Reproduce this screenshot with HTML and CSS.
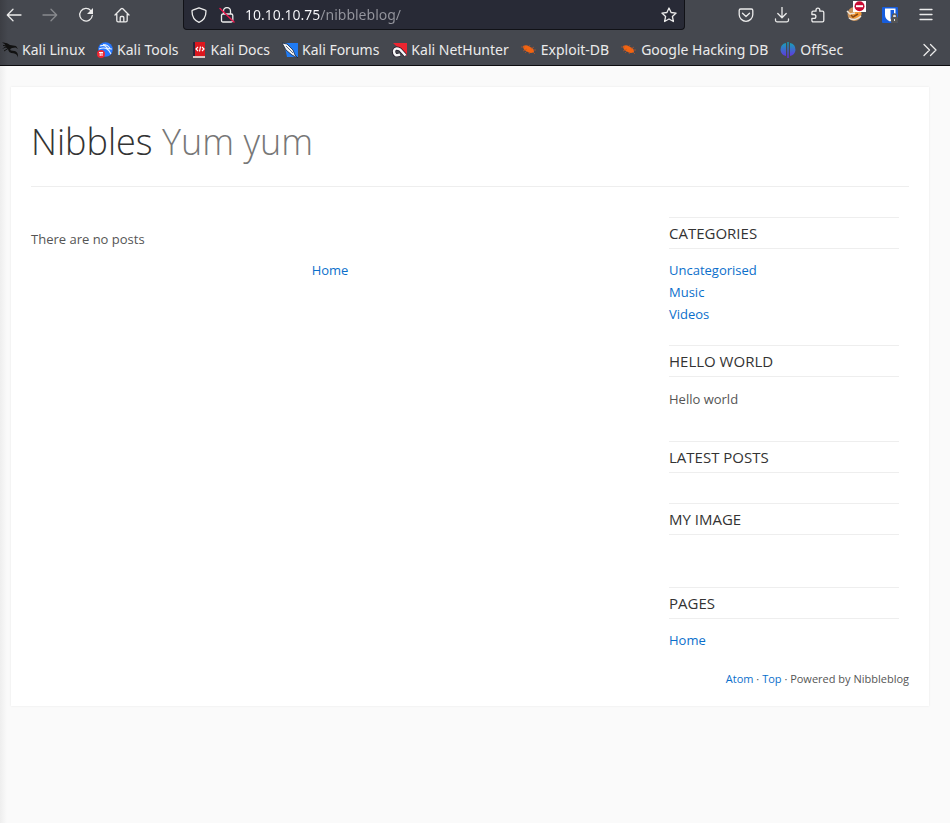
FILE: index.html
```html
<!DOCTYPE html>
<html lang="en">
<head>
<meta charset="utf-8">
<meta name="viewport" content="width=device-width, initial-scale=1">
<title>Nibbles - Yum yum</title>
<link rel="stylesheet" href="styles.css">
</head>
<body>
<div class="chrome">
  <div class="toolbar">
    <div class="tools">
      <button class="tool" aria-label="Back"><svg class="line" viewBox="0 0 16 16"><path d="M15 8H1.5M7 2.2L1.3 8 7 13.8"/></svg></button>
      <button class="tool" aria-label="Forward" disabled><svg class="line" viewBox="0 0 16 16"><path d="M1 8h13.5M9 2.2L14.7 8 9 13.8"/></svg></button>
      <button class="tool" aria-label="Reload"><svg class="line" viewBox="0 0 16 16"><path d="M12.8 3.6A6.3 6.3 0 1 0 14.3 8.500"/><path class="solid" d="M15 1v6H9z"/></svg></button>
      <button class="tool" aria-label="Home page"><svg class="line" viewBox="0 0 16 16"><path d="M1 8l6.200-6.300q.8-.7 1.600 0L15 8M2.800 7v6.500q0 1.300 1.300 1.300h7.800q1.300 0 1.300-1.300V7M6.200 14.500v-4q0-1 1-1h1.600q1 0 1 1v4"/></svg></button>
    </div>
    <div class="urlbar">
      <button class="tool" aria-label="Tracking protection"><svg class="line" viewBox="0 0 16 16"><path d="M8 .8l6.300 2.300q.7.200.7 1C15 9 13 13.500 8 15.400 3 13.500 1 9 1 4.100q0-.8.7-1z"/></svg></button>
      <button class="tool" aria-label="Connection is not secure"><svg class="line" viewBox="0 0 16 16"><path d="M4.500 7V4a3.500 3.500 0 0 1 7 0v3M4 7h8.300q1.500 0 1.500 1.500v5q0 1.500-1.500 1.500H4q-1.500 0-1.500-1.500v-5Q2.500 7 4 7z"/><path class="strike" d="M1 1.500L15 15"/></svg></button>
      <input class="address" type="text" aria-label="Address" value="10.10.10.75/nibbleblog/">
      <button class="tool" aria-label="Bookmark this page"><svg class="line" viewBox="0 0 16 16"><path d="M8 1l2.100 4.500 5 .6-3.700 3.400 1 5L8 12l-4.400 2.500 1-5L.9 6.100l5-.6z"/></svg></button>
    </div>
    <div class="tools">
      <button class="tool" aria-label="Save to Pocket"><svg class="line" viewBox="0 0 16 16"><path d="M2.600 2h10.800q1.400 0 1.400 1.400V7.500a6.800 6.800 0 0 1-13.600 0V3.400Q1.200 2 2.600 2zM4.500 6.200L8 9.500l3.500-3.300"/></svg></button>
      <button class="tool" aria-label="Downloads"><svg class="line" viewBox="0 0 16 16"><path d="M8 0v10.500M3.800 6.500L8 10.700l4.200-4.200M1.500 12v1.300q0 1.500 1.500 1.500h10q1.500 0 1.500-1.500V12"/></svg></button>
      <button class="tool" aria-label="Extensions"><svg class="line" viewBox="0 0 16 16"><path d="M6 4.200V3a1.900 1.900 0 0 1 3.800 0v1.200h2.700q1.300 0 1.300 1.300v8q0 1.300-1.300 1.300H3.200q-1.300 0-1.300-1.300v-2.200H4a1.900 1.900 0 0 0 0-3.800H1.900v-2q0-1.300 1.300-1.300z"/></svg></button>
      <button class="tool badged" aria-label="FoxyProxy"><svg viewBox="-4 -1 24 22"><circle cx="8.500" cy="13" r="7" fill="#c9935d"/><path d="M2 11l5 1 7-5 1.500 6-4 5-6-1z" fill="#f49b37"/><path d="M1 10l3 3 5-1M3 17q5 4 12-2" stroke="#e9e4dc" stroke-width="1.500" fill="none"/><path d="M5 14l2 2 5-3" stroke="#884815" stroke-width="1.500" fill="none"/><path d="M7 0h13v11H7z" fill="#fff"/><circle cx="13.500" cy="5.200" r="5" fill="#c80a32"/><path d="M10 4.200h7v2h-7z" fill="#fff"/></svg></button>
      <button class="tool" aria-label="Bitwarden"><svg viewBox="0 0 16 16"><rect width="16" height="16" rx="1" fill="#175ddc"/><path d="M3 1.500h10.500V8q0 4-5.500 6.500Q3 12 3 8z" fill="#fff"/><path d="M8.500 3H12v5q0 2.500-3.500 4.500z" fill="#175ddc"/><path d="M10.500 10.500V9a2 2 0 0 1 4 0v1.500" stroke="#555" stroke-width="1.300" fill="#ddd"/><rect x="9" y="10" width="7" height="6" rx="1" fill="#555"/><path d="M12 12h1v2h-1z" fill="#ddd"/></svg></button>
      <button class="tool" aria-label="Open application menu"><svg class="line" viewBox="0 0 16 16"><path d="M2 2.500h12M2 7.500h12M2 12.500h12"/></svg></button>
    </div>
  </div>
  <nav class="bookmarks" aria-label="Bookmarks">
    <a href="#"><svg viewBox="0 0 16 16"><path d="M0 .5Q5 0 8 3l3 .5 3 .5 2 3-2.500-1.500-3.500.5q-3 1-1 2.500l3.500.5q4 1 3.500 6.500-1-4-4.500-4.300-5 0-5.500-4.200L4 5.500 0 7l4-3Q3 1.500 0 .5z" fill="#111"/><path d="M1 3.500l6 .5M2 9l4-2.500" stroke="#111"/></svg>Kali Linux</a>
    <a href="#"><svg viewBox="0 0 16 16"><circle cx="8.500" cy="7.500" r="7.300" fill="#2777ff"/><path d="M3 4q5-2 7 2 1 1 5 1M2 7q5-2 8 0 2 1 4 5M6 2.500q5 0 7 4" stroke="#e5f1ff" stroke-width="1.100" fill="none"/><circle cx="4" cy="12" r="4" fill="#ee2633"/><path d="M2 10.500h4M3.200 10.500V14M5 10.500V14" stroke="#fff"/></svg>Kali Tools</a>
    <a href="#"><svg viewBox="0 0 16 16"><path d="M2 0h11v15H2z" fill="#29243a"/><path d="M4 0h10v14H4z" fill="#dc171e"/><path d="M2 14h12v2H2z" fill="#d8c7c4"/><path d="M7 5L5 7l2 2M11 5l2 2-2 2M9.500 4.500l-1 5" stroke="#fff" stroke-width="1.200" fill="none"/></svg>Kali Docs</a>
    <a href="#"><svg viewBox="0 0 16 16"><path d="M2 1h14v14H5z" fill="#207bf3"/><path d="M0 1l5 1 6 6 2 5 3 3-6-3-6-5z" fill="#f4f4f4" stroke="#18263d" stroke-width=".8"/><path d="M4 4l7 7" stroke="#637286"/></svg>Kali Forums</a>
    <a href="#"><svg viewBox="0 0 16 16"><path d="M2 1h14v13z" fill="#ed2530"/><path d="M14.500 13.500L9 7.500Q4 5 3 9q0 6 6 3.500" fill="none" stroke="#231c2b" stroke-width="4"/><path d="M14.500 13.500L9 7.500Q4 5 3 9q0 6 6 3.500" fill="none" stroke="#f5f5f5" stroke-width="2.500"/></svg>Kali NetHunter</a>
    <a href="#"><svg viewBox="0 0 16 16"><path d="M2 4q4-2 7 1 4 1 4 5-4 2-7-.5Q2 8 2 4z" fill="#f26411"/><path d="M0 5h4M2 9l4-2M8 5l1-2M10 7l3-2M12 8h3M6 9l-2 2M9 10l-1 2M12 10l2 2" stroke="#b9582c" stroke-width=".7"/></svg>Exploit-DB</a>
    <a href="#"><svg viewBox="0 0 16 16"><path d="M2 4q4-2 7 1 4 1 4 5-4 2-7-.5Q2 8 2 4z" fill="#f26411"/><path d="M0 5h4M2 9l4-2M8 5l1-2M10 7l3-2M12 8h3M6 9l-2 2M9 10l-1 2M12 10l2 2" stroke="#b9582c" stroke-width=".7"/></svg>Google Hacking DB</a>
    <a href="#"><svg viewBox="0 0 16 16"><defs><linearGradient id="offsec" x2="0" y2="1"><stop stop-color="#12a8b5"/><stop offset="1" stop-color="#6b28e5"/></linearGradient></defs><path d="M6 1v13Q1 13 .5 8 .5 2 6 1zM7.300 0h1.400v16H7.300zM10 1q5.500 1 5.500 7-.5 5-5.500 6z" fill="url(#offsec)"/></svg>OffSec</a>
    <button class="tool more" aria-label="Show more bookmarks"><svg class="line" viewBox="0 0 16 16"><path d="M2 2.500L7.500 8 2 13.500M8.500 2.500L14 8l-5.500 5.500"/></svg></button>
  </nav>
</div>
<div class="page" id="top">
  <div class="card">
    <header class="masthead">
      <h1>Nibbles <span>Yum yum</span></h1>
    </header>
    <div class="columns">
      <main>
        <p>There are no posts</p>
        <nav class="pager" aria-label="Posts"><a href="#">Home</a></nav>
      </main>
      <aside>
        <section><h2>Categories</h2>
          <ul><li><a href="#">Uncategorised</a></li><li><a href="#">Music</a></li><li><a href="#">Videos</a></li></ul>
        </section>
        <section><h2>Hello world</h2><p>Hello world</p></section>
        <section><h2>Latest posts</h2></section>
        <section><h2>My image</h2><div class="empty-image"></div></section>
        <section><h2>Pages</h2><ul><li><a href="#">Home</a></li></ul></section>
      </aside>
    </div>
    <footer><a href="#">Atom</a> · <a href="#top">Top</a> · Powered by Nibbleblog</footer>
  </div>
</div>
</body>
</html>
```
FILE: styles.css
```css
* { box-sizing: border-box; }

body {
  margin: 0;
  min-height: 100vh;
  display: flex;
  flex-direction: column;
  font: 13px/22px "Open Sans", sans-serif;
  color: #555;
  background: #fafafa;
}

a { color: #0b6fcb; text-decoration: none; }

/* Browser bars */
.chrome {
  color: #ebebeb;
  font: 14px/20px "Noto Sans", sans-serif;
  background: linear-gradient(to right, #3c3e44, #45484f 8px);
  border-bottom: 1px solid #0c0c0f;
}

.toolbar { display: flex; gap: 47px; padding-right: 10px; }
.tools { display: flex; gap: 8px; }

.tool {
  display: flex;
  align-items: center;
  justify-content: center;
  width: 28px;
  height: 29px;
  padding: 0;
  border: 0;
  background: none;
  color: inherit;
}
.tool:disabled { opacity: .4; }
.tool svg { width: 16px; height: 16px; }
.badged { align-items: flex-start; }
.badged svg { width: 24px; height: 22px; }

.line { fill: none; stroke: currentColor; stroke-width: 1.3; stroke-linecap: round; stroke-linejoin: round; }
.line .solid { fill: currentColor; stroke: none; }
.line .strike { stroke: #e6174b; stroke-width: 1.5; }

.urlbar {
  flex: 1;
  min-width: 0;
  display: flex;
  height: 30px;
  padding: 0 1px;
  background: #282a36;
  border: 1px solid #111217;
  border-top: 0;
  border-radius: 0 0 4px 4px;
}
.address {
  flex: 1;
  min-width: 0;
  height: 29px;
  padding: 0 4px;
  border: 0;
  font: 14px/20px "Noto Sans", sans-serif;
  color: transparent;
  caret-color: #fbfbfe;
  background: linear-gradient(to right, #fbfbfe 79px, #95969e 79px);
  -webkit-background-clip: text;
  background-clip: text;
}

.bookmarks {
  display: flex;
  align-items: center;
  gap: 12px;
  height: 35px;
  padding: 4px 6px 0 2px;
  white-space: nowrap;
}
.bookmarks a { display: flex; align-items: center; gap: 4px; color: inherit; }
.bookmarks a svg { width: 16px; height: 16px; }
.bookmarks .more { margin-left: auto; }

/* Blog */
.page {
  flex: 1;
  padding: 21px 21px 21px 11px;
  background: linear-gradient(to right, #eee, #fafafa 7px);
}
.card {
  padding: 20px 20px 19px;
  background: #fff;
  box-shadow: 0 0 2px #e8e8e8;
}
.masthead { padding: 8px 0 18px; border-bottom: 1px solid #eee; }
h1 { margin: 0; font-size: 36px; line-height: 53px; font-weight: 300; color: #333; }
h1 span { color: #777; }

.columns { display: flex; gap: 40px; padding: 30px 10px 0 0; }
main { flex: 13; }
aside { flex: 5; }
p { margin: 11px 0; }
main p { margin-bottom: 9px; }
.pager { text-align: center; }

section { margin-bottom: 20px; display: flow-root; }
h2 {
  margin: 0 0 10px;
  border: solid #eee;
  border-width: 1px 0;
  font-size: 15px;
  line-height: 30px;
  font-weight: 400;
  text-transform: uppercase;
  color: #333;
}
ul { margin: 0; padding: 0; list-style: none; }
.empty-image { height: 22px; }
footer { font-size: 11px; line-height: 16px; text-align: right; }
```
